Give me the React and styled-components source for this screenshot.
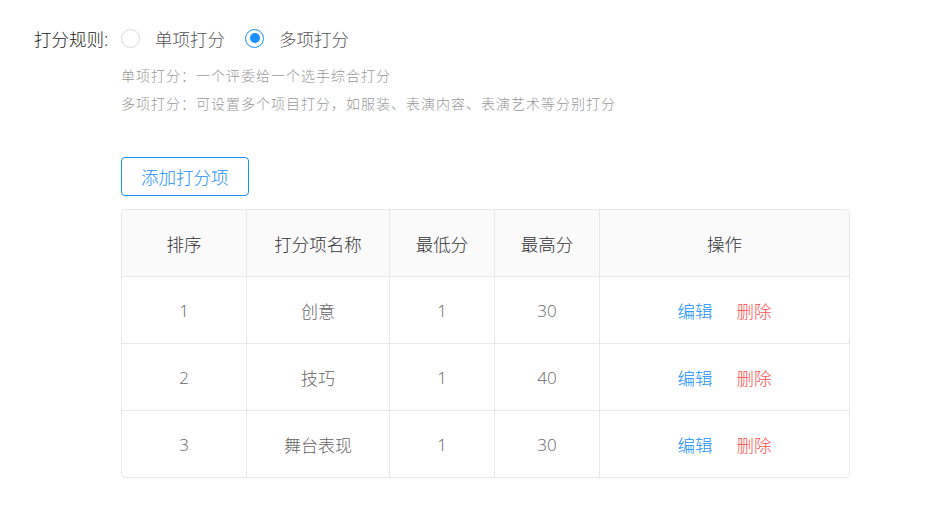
import React from "react";
import styled, { createGlobalStyle } from "styled-components";

const Global = createGlobalStyle`
  html, body { margin: 0; padding: 0; background: #fff; }
  body { font-family: "Open Sans", "Noto Sans CJK SC", sans-serif; font-weight: 300; }
`;

const Page = styled.div`
  padding: 21px 0 0 34px;
  width: 947px;
  box-sizing: border-box;
`;

const RuleRow = styled.div`
  display: flex;
  align-items: center;
  height: 34px;
`;

const Label = styled.span`
  font-size: 17.5px;
  color: #222;
  width: 87px;
  white-space: nowrap;
`;

const RadioItem = styled.label`
  display: flex;
  align-items: center;
  margin-right: 20px;
  font-size: 17.5px;
  color: #555;
  cursor: pointer;
`;

const Circle = styled.span`
  width: 19px;
  height: 19px;
  box-sizing: border-box;
  border-radius: 50%;
  border: 1px solid ${(p) => (p.$checked ? "#1890ff" : "#d9d9d9")};
  display: flex;
  align-items: center;
  justify-content: center;
  margin-right: 15px;
  &::after {
    content: "";
    width: 10px;
    height: 10px;
    border-radius: 50%;
    background: #1890ff;
    display: ${(p) => (p.$checked ? "block" : "none")};
  }
`;

const Hints = styled.div`
  margin: 7px 0 0 87px;
`;

const Hint = styled.div`
  font-size: 14px;
  letter-spacing: 1px;
  line-height: 28px;
  color: #999;
`;

const Content = styled.div`
  margin: 39px 0 0 87px;
`;

const AddButton = styled.button`
  height: 39px;
  padding: 0 19px;
  border: 1px solid #1890ff;
  border-radius: 4px;
  background: #fff;
  color: #1890ff;
  font-size: 17.5px;
  font-family: inherit;
  font-weight: 300;
`;

const Table = styled.table`
  margin-top: 13px;
  width: 729px;
  border-collapse: separate;
  border-spacing: 0;
  border: 1px solid #e8e8e8;
  border-radius: 4px;
  overflow: hidden;
  table-layout: fixed;
`;

const Th = styled.th`
  height: 66px;
  background: #fafafa;
  font-weight: 300;
  font-size: 17.5px;
  color: #333;
  text-align: center;
  border-bottom: 1px solid #e8e8e8;
  border-left: 1px solid #e8e8e8;
  &:first-child { border-left: none; }
  padding: 0;
`;

const Td = styled.td`
  height: 66px;
  font-size: 17px;
  color: #666;
  text-align: center;
  border-left: 1px solid #e8e8e8;
  padding: 0;
  &:first-child { border-left: none; }
  tr:not(:last-child) > & { border-bottom: 1px solid #e8e8e8; }
`;

const Actions = styled.div`
  display: flex;
  justify-content: center;
  gap: 24px;
  font-size: 17.5px;
`;

const Action = styled.a`
  color: ${(p) => (p.$danger ? "#ff4d4f" : "#1890ff")};
  cursor: pointer;
`;

const rows = [
  { no: 1, name: "创意", min: 1, max: 30 },
  { no: 2, name: "技巧", min: 1, max: 40 },
  { no: 3, name: "舞台表现", min: 1, max: 30 },
];

export default function App() {
  return (
    <Page>
      <Global />
      <RuleRow>
        <Label>打分规则:</Label>
        <RadioItem>
          <Circle />
          单项打分
        </RadioItem>
        <RadioItem>
          <Circle $checked />
          多项打分
        </RadioItem>
      </RuleRow>
      <Hints>
        <Hint>单项打分：一个评委给一个选手综合打分</Hint>
        <Hint>多项打分：可设置多个项目打分，如服装、表演内容、表演艺术等分别打分</Hint>
      </Hints>
      <Content>
        <AddButton>添加打分项</AddButton>
        <Table>
          <colgroup>
            <col style={{ width: 124 }} />
            <col style={{ width: 143 }} />
            <col style={{ width: 105 }} />
            <col style={{ width: 105 }} />
            <col />
          </colgroup>
          <thead>
            <tr>
              <Th>排序</Th>
              <Th>打分项名称</Th>
              <Th>最低分</Th>
              <Th>最高分</Th>
              <Th>操作</Th>
            </tr>
          </thead>
          <tbody>
            {rows.map((r) => (
              <tr key={r.no}>
                <Td>{r.no}</Td>
                <Td>{r.name}</Td>
                <Td>{r.min}</Td>
                <Td>{r.max}</Td>
                <Td>
                  <Actions>
                    <Action>编辑</Action>
                    <Action $danger>删除</Action>
                  </Actions>
                </Td>
              </tr>
            ))}
          </tbody>
        </Table>
      </Content>
    </Page>
  );
}
